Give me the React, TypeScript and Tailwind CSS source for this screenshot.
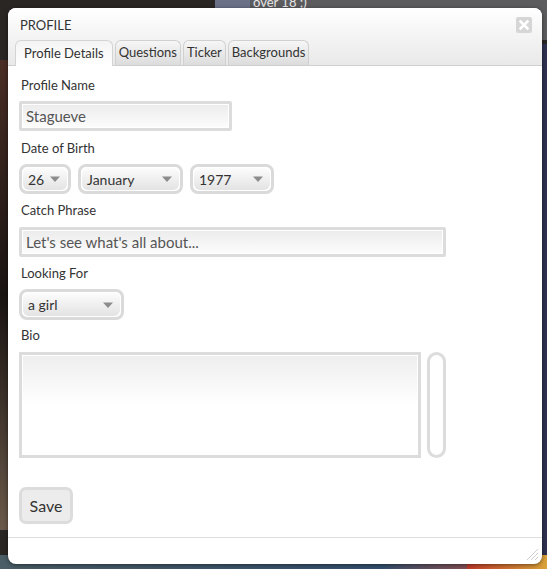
import React from 'react';

const Arrow = () => (
  <svg width="10" height="6" viewBox="0 0 10 6" className="shrink-0">
    <path d="M0 0.5h10L5 6z" fill="#8c8c8c" />
  </svg>
);

type SelectProps = { value: string; width: string; height?: string };

const FakeSelect: React.FC<SelectProps> = ({ value, width, height = 'h-[30px]' }) => (
  <div className={`${width} ${height} rounded-[8px] border-[3px] border-[#dadada] bg-white p-px`}>
    <div className="h-full rounded-[6px] bg-linear-to-b from-[#fcfcfc] to-[#e3e3e3] flex items-center justify-between pl-[5px] pr-[7px] text-[14px] text-[#333]">
      <span>{value}</span>
      <Arrow />
    </div>
  </div>
);

const Label: React.FC<{ children: React.ReactNode; className?: string }> = ({ children, className = '' }) => (
  <div className={`h-4 leading-4 pl-[2px] text-[13px] text-[#333] ${className}`}>{children}</div>
);

const TextInput: React.FC<{ value: string; width: string }> = ({ value, width }) => (
  <div className={`${width} h-[30px] rounded-[2px] border-[3px] border-[#dcdcdc] bg-white p-px`}>
    <div className="h-full bg-linear-to-b from-[#ececec] to-[#fcfcfc] flex items-center pl-[3px] text-[15px] text-[#555]">
      {value}
    </div>
  </div>
);

const tabs = ['Profile Details', 'Questions', 'Ticker', 'Backgrounds'];

export default function App() {
  return (
    <div className="w-[554px] h-[576px] bg-white" style={{ fontFamily: 'Lato, "Open Sans", sans-serif' }}>
      <div className="relative w-[547px] h-[569px] overflow-hidden bg-[#2a2624]">
        {/* page behind the modal */}
        <div className="absolute left-[215px] top-0 w-[332px] h-[40px] bg-[#5c5c5e]" />
        <div className="absolute left-[215px] top-0 w-[35px] h-[8px] bg-[#6b7288]" />
        <div className="absolute left-[253px] -top-[6px] text-[13px] leading-4 text-[#e8e8e8]">over 18 ;)</div>
        <div className="absolute right-0 top-[44px] w-[12px] h-[525px] bg-[#2f3250]" />
        <div className="absolute left-0 top-[60px] w-[10px] h-[470px] bg-linear-to-b from-[#4a2e25] via-[#1a1412] to-[#6b5a4a]" />
        <div className="absolute left-0 bottom-0 w-[547px] h-[14px] bg-linear-to-r from-[#4a5e66] via-[#34506e] via-70% to-[#c23a2a]" />
        <div className="absolute right-0 bottom-0 w-[80px] h-[14px] bg-linear-to-r from-[#c23a2a] to-[#d9a23a]" />

        <div className="relative p-2">
          <div className="w-[534px] h-[556px] rounded-[8px] bg-white shadow-[0_1px_4px_rgba(0,0,0,0.5)] overflow-hidden flex flex-col">
            {/* header */}
            <div className="h-[58px] bg-linear-to-b from-white to-[#e9e9e9] border-b border-[#cfcfcf] flex flex-col">
              <div className="h-[32px] flex items-start justify-between pl-3 pr-[10px]">
                <div className="mt-[9px] text-[13px] leading-4 text-[#333]">PROFILE</div>
                <div className="mt-[9px] w-4 h-4 rounded-[2px] bg-[#d6d6d6] flex items-center justify-center">
                  <svg width="10" height="10" viewBox="0 0 10 10">
                    <path d="M1.5 1.5l7 7M8.5 1.5l-7 7" stroke="#fff" strokeWidth="2.6" strokeLinecap="square" />
                  </svg>
                </div>
              </div>
              <div className="flex items-end gap-[2px] pl-[7px] h-[26px]">
                {tabs.map((t, i) => (
                  <div
                    key={t}
                    className={
                      i === 0
                        ? 'h-[26px] -mb-px px-[8px] rounded-t-[6px] border border-b-0 border-[#d4d4d4] bg-linear-to-b from-[#f4f4f4] to-white flex items-center text-[13px] text-[#333]'
                        : 'h-[25px] px-[3px] rounded-t-[6px] border border-b-0 border-[#d0d0d0] bg-linear-to-b from-[#f6f6f6] to-[#dcdcdc] flex items-center text-[13px] text-[#333]'
                    }
                  >
                    {t}
                  </div>
                ))}
              </div>
            </div>

            {/* body */}
            <div className="flex-1 pl-[11px] pt-[11px]">
              <Label className="mb-2">Profile Name</Label>
              <TextInput value="Stagueve" width="w-[213px]" />

              <Label className="mt-[9px] mb-2">Date of Birth</Label>
              <div className="flex gap-[7px]">
                <FakeSelect value="26" width="w-[52px]" />
                <FakeSelect value="January" width="w-[105px]" />
                <FakeSelect value="1977" width="w-[84px]" />
              </div>

              <Label className="mt-[8px] mb-[9px]">Catch Phrase</Label>
              <TextInput value="Let's see what's all about..." width="w-[427px]" />

              <Label className="mt-[8px] mb-2">Looking For</Label>
              <FakeSelect value="a girl" width="w-[105px]" height="h-[31px]" />

              <Label className="mt-[7px] mb-[9px]">Bio</Label>
              <div className="flex gap-[6px]">
                <div className="w-[402px] h-[106px] border-[3px] border-[#dcdcdc] bg-white p-px">
                  <div className="h-full bg-linear-to-b from-[#eeeeee] via-white to-white" />
                </div>
                <div className="w-[19px] h-[106px] rounded-full border-[3px] border-[#dcdcdc] bg-white" />
              </div>

              <button className="mt-[29px] w-[54px] h-[37px] rounded-[7px] border-[3px] border-[#dcdcdc] bg-[#ececec] text-[16px] text-[#333] flex items-center justify-center">
                Save
              </button>
            </div>

            {/* footer */}
            <div className="h-[27px] border-t border-[#dedede] flex items-end justify-end pr-[3px] pb-[3px]">
              <svg width="14" height="14" viewBox="0 0 14 14">
                <path d="M13 2L2 13M13 6L6 13M13 10L10 13" stroke="#cfcfcf" strokeWidth="1" />
              </svg>
            </div>
          </div>
        </div>
      </div>
    </div>
  );
}
